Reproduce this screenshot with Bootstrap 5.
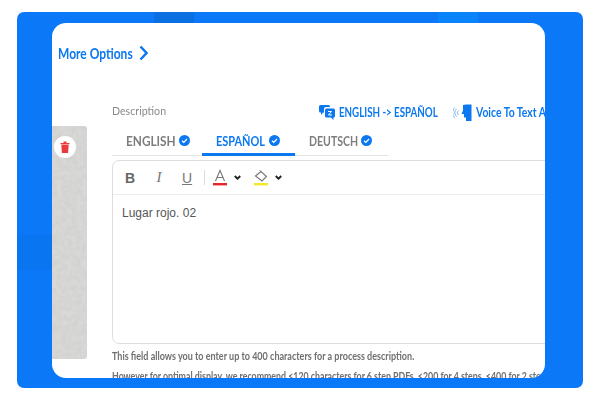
<!DOCTYPE html>
<html lang="en">
<head>
<meta charset="utf-8">
<title>Description editor</title>
<link href="https://cdn.jsdelivr.net/npm/bootstrap@5.3.0/dist/css/bootstrap.min.css" rel="stylesheet">
<style>
html,body{width:600px;height:400px;overflow:hidden;background:#fff;}
body{font-family:"Lato","Noto Sans",sans-serif;}
.sq{display:inline-block;white-space:nowrap;transform-origin:0 50%;}
.frame{position:relative;margin:12px 0 0 17px;width:566px;height:376px;background:#0b78f8;border-radius:7px;padding:11px 38px 10px 35px;}
.patch{position:absolute;}
.patch-a{left:137px;top:0;width:40px;height:11px;background:#0a70e2;}
.patch-b{left:421px;top:0;width:40px;height:11px;background:#0a84fb;}
.patch-c{left:0;top:223px;width:35px;height:35px;background:#0a75f1;}
.sheet{width:493px;height:355px;background:#fff;border-radius:14px;overflow:hidden;}
.more{padding:20px 0 0 6px;height:62px;color:#0b78f0;font-weight:700;font-size:15px;line-height:20px;gap:7px;}
.more .sq{transform:scaleX(.8);margin-right:-19px;}
.body-row{gap:25px;}
.rail{position:relative;flex:0 0 35px;width:35px;height:233px;margin-top:41px;background:#d2d2d0;border-radius:0 3px 3px 0;overflow:hidden;}
.rail svg.tex{display:block;width:100%;height:100%;}
.trash{position:absolute;left:2px;top:10px;width:22px;height:22px;border-radius:50%;background:#fff;}
.main{flex:0 0 auto;width:460px;padding-top:17px;}
.topline{height:17px;width:480px;}
.desc{color:#8a8a8a;font-size:12px;line-height:17px;width:126px;flex:none;}
.desc .sq{transform:scaleX(.885);}
.trans{color:#0b78f0;font-weight:700;font-size:13px;line-height:17px;white-space:nowrap;gap:4px;margin-top:4px;flex:none;}
.trans.first .sq{transform:scaleX(.75);margin-right:-33px;}
.trans.second .sq{transform:scaleX(.8);}
.trans.first{margin-left:81px;}
.trans.second{margin-left:15px;}
.tabrow{width:276px;height:24px;margin-top:13px;border-bottom:1px solid #e4e4e4;font-size:13.500px;font-weight:700;}
.tabitem{color:#7d7d7d;line-height:18px;height:24px;gap:3px;white-space:nowrap;font-weight:700;}
.tabitem svg{margin-top:3px;}
.tabitem.t1{width:90px;padding-left:14px;}
.tabitem.t1 .sq{transform:scaleX(.875);margin-right:-7px;}
.tabitem.t2{width:93px;padding-left:14px;color:#0b78f0;border-bottom:3px solid #0b78f0;}
.tabitem.t2 .sq{transform:scaleX(.81);margin-right:-11px;}
.tabitem.t3{padding-left:14px;}
.tabitem.t3 .sq{transform:scaleX(.78);margin-right:-14px;}
.editor{margin-top:4px;width:460px;height:184px;border:1px solid #dedede;border-radius:7px;background:#fff;}
.tools{height:34px;border-bottom:1px solid #ececec;padding-left:12px;color:#666;}
.tb{width:10px;font-family:"Liberation Sans",sans-serif;font-size:14px;line-height:1;text-align:center;}
.tb.i{margin-left:19px;font-family:"Liberation Serif",serif;font-style:italic;color:#777;font-size:15px;}
.tb.u{margin-left:18px;text-decoration:underline;color:#777;font-weight:400;}
.sep{width:1px;height:15px;background:#dcdcdc;margin:0 8px 0 12px;}
.caret{margin-left:7px;}
.swatch-gap{margin-left:13px;}
.etext{padding:10px 9px;font-family:"Liberation Sans",sans-serif;font-size:12px;color:#555;line-height:16px;}
.note{font-size:11px;font-weight:700;color:#6f6f6f;line-height:14px;white-space:nowrap;}
.note.n1 .sq{transform:scaleX(.82);}
.note.n2 .sq{transform:scaleX(.8);}
.note.n1{margin-top:5px;}
.note.n2{margin-top:6px;}
</style>
</head>
<body>
<div class="frame">
  <div class="patch patch-a"></div><div class="patch patch-b"></div><div class="patch patch-c"></div>
  <div class="sheet">
    <div class="more d-flex align-items-start">
      <span class="sq">More Options</span>
      <svg width="9" height="20" viewBox="0 0 9 20"><path d="M1.500 3.500 7.500 10 1.500 16.500" fill="none" stroke="#0b78f0" stroke-width="2.400"/></svg>
    </div>
    <div class="body-row d-flex">
      <div class="rail">
        <svg class="tex" aria-hidden="true"><filter id="grain"><feTurbulence type="fractalNoise" baseFrequency=".2" numOctaves="4" seed="4"/><feColorMatrix values="0 0 0 0 .72 0 0 0 0 .72 0 0 0 0 .71 0 0 0 1.400 -.4"/></filter><rect width="100%" height="100%" filter="url(#grain)"/></svg>
        <div class="trash d-flex align-items-center justify-content-center">
          <svg width="10" height="12" viewBox="0 0 10 12"><path d="M.5 2h9v1.200h-9zM3.500.6h3V2h-3zM1.300 3.800h7.400l-.6 7.600a.7.7 0 0 1-.7.6H2.600a.7.7 0 0 1-.7-.6z" fill="#ea3a3a"/></svg>
        </div>
      </div>
      <div class="main">
        <div class="topline d-flex align-items-center">
          <span class="desc"><span class="sq">Description</span></span>
          <span class="trans first d-inline-flex align-items-center">
            <svg width="16" height="15" viewBox="0 0 16 15"><path d="M1.500 0h8a1.500 1.500 0 0 1 1.500 1.500v.5H7A2 2 0 0 0 5 4v3.500H4L2 10V7.500h-.5A1.500 1.500 0 0 1 0 6V1.500A1.500 1.500 0 0 1 1.500 0z" fill="#0b78f0"/><path d="M7.500 3.500h7A1.500 1.500 0 0 1 16 5v6a1.500 1.500 0 0 1-1.500 1.500V15l-2.500-2.500H7.500A1.500 1.500 0 0 1 6 11V5a1.500 1.500 0 0 1 1.500-1.500z" fill="#0b78f0"/><path d="M9 6.500h3.500l-3 3.500h3.500" fill="none" stroke="#fff" stroke-width="1"/></svg>
            <span class="sq">ENGLISH -&gt; ESPAÑOL</span>
          </span>
          <span class="trans second d-inline-flex align-items-center">
            <svg width="19" height="17" viewBox="0 0 19 17"><path d="M10 1 13 .5h5.500V17H13v-3.500h-2V10H8.500L10 6.500z" fill="#0b78f0"/><path d="M5.500 6.500a3 3 0 0 0 0 4.500M3.500 5a5 5 0 0 0 0 7.500M1.700 3.500a7.500 7.500 0 0 0 0 10.500" fill="none" stroke="#6fa8ea" stroke-width=".9"/></svg>
            <span class="sq">Voice To Text Assistant</span>
          </span>
        </div>
        <div class="tabrow d-flex">
          <div class="tabitem t1 d-flex"><span class="sq">ENGLISH</span>
            <svg width="11" height="11" viewBox="0 0 11 11"><circle cx="5.500" cy="5.500" r="5.500" fill="#0b78f0"/><path d="M3 5.700 4.800 7.300 8 4" fill="none" stroke="#fff" stroke-width="1.200"/></svg>
          </div>
          <div class="tabitem t2 d-flex"><span class="sq">ESPAÑOL</span>
            <svg width="11" height="11" viewBox="0 0 11 11"><circle cx="5.500" cy="5.500" r="5.500" fill="#0b78f0"/><path d="M3 5.700 4.800 7.300 8 4" fill="none" stroke="#fff" stroke-width="1.200"/></svg>
          </div>
          <div class="tabitem t3 d-flex"><span class="sq">DEUTSCH</span>
            <svg width="11" height="11" viewBox="0 0 11 11"><circle cx="5.500" cy="5.500" r="5.500" fill="#0b78f0"/><path d="M3 5.700 4.800 7.300 8 4" fill="none" stroke="#fff" stroke-width="1.200"/></svg>
          </div>
        </div>
        <div class="editor">
          <div class="tools d-flex align-items-center">
            <span class="tb fw-bold">B</span>
            <span class="tb i">I</span>
            <span class="tb u">U</span>
            <span class="sep"></span>
            <svg width="14" height="17" viewBox="0 0 14 17"><path d="M2.500 12 7 1.500l4.500 10.500M4 8.500h6" fill="none" stroke="#777" stroke-width="1.100"/><rect y="14" width="14" height="2.400" fill="#e8262a"/></svg>
            <svg class="caret" width="7" height="5" viewBox="0 0 7 5"><path d="M.8 1 3.500 3.700 6.200 1" fill="none" stroke="#222" stroke-width="1.900"/></svg>
            <svg class="swatch-gap" width="14" height="17" viewBox="0 0 14 17"><path d="M1.500 7 7 2.500 12.500 7.500 8 12z" fill="none" stroke="#777" stroke-width="1.100"/><path d="M5.500 1 7 2.500" stroke="#777"/><rect y="14" width="14" height="2.400" fill="#f3e928"/></svg>
            <svg class="caret" width="7" height="5" viewBox="0 0 7 5"><path d="M.8 1 3.500 3.700 6.200 1" fill="none" stroke="#222" stroke-width="1.900"/></svg>
          </div>
          <div class="etext">Lugar rojo. 02</div>
        </div>
        <div class="note n1"><span class="sq">This field allows you to enter up to 400 characters for a process description.</span></div>
        <div class="note n2"><span class="sq">However for optimal display, we recommend &lt;120 characters for 6 step PDFs, &lt;200 for 4 steps, &lt;400 for 2 steps.</span></div>
      </div>
    </div>
  </div>
</div>
<script src="https://cdn.jsdelivr.net/npm/bootstrap@5.3.0/dist/js/bootstrap.bundle.min.js"></script>
</body>
</html>
